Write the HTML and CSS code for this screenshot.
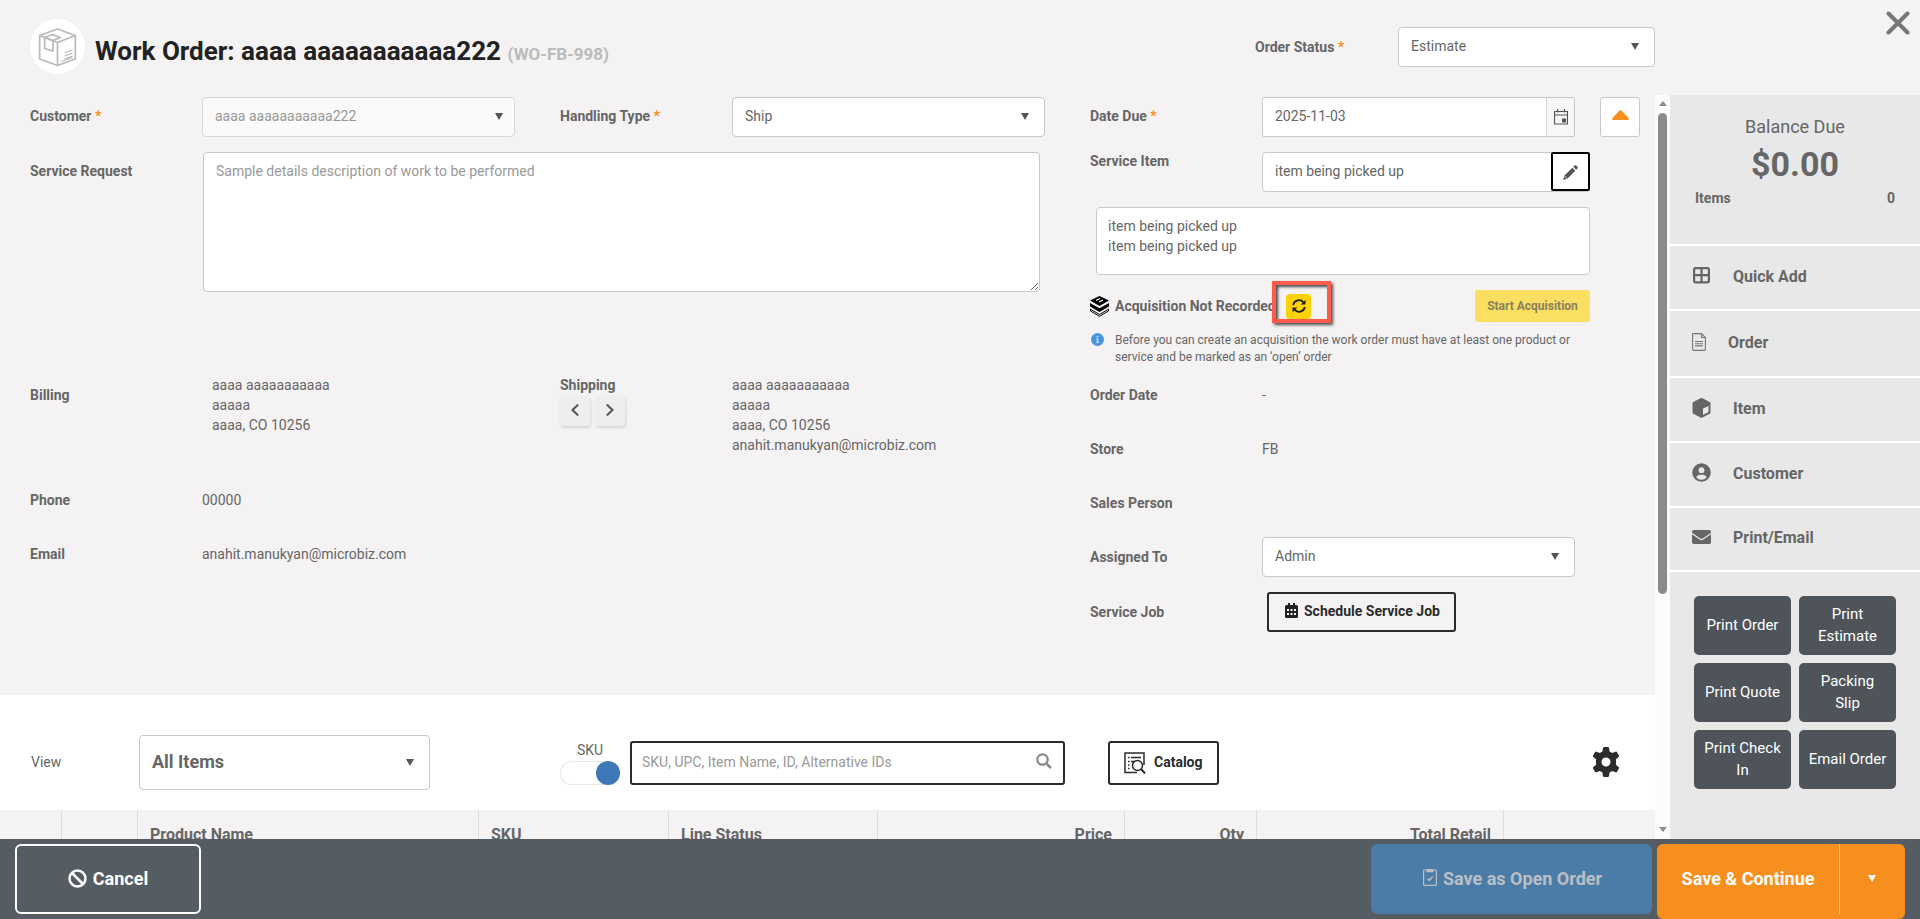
FILE: index.html
```html
<!DOCTYPE html>
<html lang="en">
<head>
  <meta charset="UTF-8">
  <meta name="viewport" content="width=device-width, initial-scale=1.0">
  <title>Work Order WO-FB-998</title>
  <link rel="stylesheet" href="styles.css">
</head>
<body>

<div class="page">

  <!-- Header -->
  <header class="header">
    <div class="header-icon">
      <svg width="39" height="40" viewBox="0 0 35 40" preserveAspectRatio="none" fill="none" stroke="#b9b9b9" stroke-width="1.5" stroke-linejoin="round">
        <path d="M17.5 2 33.500 8.500V32L17.500 38.500 1.500 32V8.500Z"/>
        <path d="M1.500 8.500 17.500 15.500 33.500 8.500M17.500 15.500V38.500"/>
        <path d="M6 10.500 13 7.500 20 10.500 13.500 13.500M6 10.500V21.500L13.500 24V13.500Z"/>
        <path d="M24 26 31 23M24 29 31 26M24 32 31 29M20.500 34.500 31 30.500" stroke-width="1.200"/>
      </svg>
    </div>
    <h1 class="title">Work Order: aaaa aaaaaaaaaaa222 <small>(WO-FB-998)</small></h1>
    <div class="status">
      <label class="label">Order Status <i>*</i></label>
      <div class="select status-select">Estimate</div>
    </div>
    <button class="close" aria-label="Close">
      <svg width="24" height="24" viewBox="0 0 24 24" stroke="#777" stroke-width="4" stroke-linecap="round"><path d="M2.500 2.500 21.500 21.500M21.500 2.500 2.500 21.500"/></svg>
    </button>
  </header>

  <div class="body">
    <main class="main">

      <section class="form">
        <div class="form-left">
          <div class="row row-top">
            <label class="label">Customer <i>*</i></label>
            <div class="select disabled">aaaa aaaaaaaaaaa222</div>
            <label class="label second">Handling Type <i>*</i></label>
            <div class="select">Ship</div>
          </div>
          <div class="row row-request">
            <label class="label">Service Request</label>
            <textarea class="textarea request" placeholder="Sample details description of work to be performed"></textarea>
          </div>
          <div class="row row-address">
            <span class="label billing-label">Billing</span>
            <div class="address billing">aaaa aaaaaaaaaaa<br>aaaaa<br>aaaa, CO 10256</div>
            <div class="shipping-label">
              <span class="label">Shipping</span>
              <div class="arrows">
                <button class="arrow" aria-label="Previous"><svg width="10" height="14" viewBox="0 0 10 14"><path d="M8.200 1.500 2.500 7 8.200 12.500"/></svg></button>
                <button class="arrow" aria-label="Next"><svg width="10" height="14" viewBox="0 0 10 14"><path d="M1.800 1.500 7.500 7 1.800 12.500"/></svg></button>
              </div>
            </div>
            <div class="address">aaaa aaaaaaaaaaa<br>aaaaa<br>aaaa, CO 10256<br>anahit.manukyan@microbiz.com</div>
          </div>
          <div class="row row-info">
            <span class="label">Phone</span><span>00000</span>
          </div>
          <div class="row row-info">
            <span class="label">Email</span><span>anahit.manukyan@microbiz.com</span>
          </div>
        </div>

        <div class="form-right">
          <div class="row row-top">
            <label class="label">Date Due <i>*</i></label>
            <div class="date">
              <span class="date-value">2025-11-03</span>
              <span class="date-btn">
                <svg width="14" height="16" viewBox="0 0 14 16" fill="none" stroke="#555"><path d="M.5 2.500h13v12.500H.5zM.5 6h13M3.500 0v3.500M10.500 0v3.500" stroke-width="1.200"/><path d="M8 9.500h4v4H8z" fill="#555" stroke="none"/></svg>
              </span>
            </div>
            <button class="collapse" aria-label="Collapse"><svg width="17" height="10" viewBox="0 0 16 10" preserveAspectRatio="none"><path d="M7 .5Q8 0 9 .5L15.800 8.200Q16.200 10 14.500 10H1.500Q-.2 10 .2 8.200Z" fill="#f78f1e"/></svg></button>
          </div>
          <div class="row row-item">
            <label class="label">Service Item</label>
            <div class="item-input">
              <span>item being picked up</span>
              <button class="edit" aria-label="Edit">
                <svg width="15" height="15" viewBox="0 0 15 15" fill="#555"><path d="M9.300 2.700 12.300 5.700 4.500 13.500 0 15 1.500 10.500ZM10.200 1.800 11.500.5Q12.300-.2 13.200.6L14.400 1.800Q15.200 2.700 14.500 3.500L13.200 4.800Z"/><path d="M1.800 11.300 3.700 13.200" stroke="#fff"/></svg>
              </button>
            </div>
          </div>
          <textarea class="textarea item-note">item being picked up
item being picked up</textarea>
          <div class="acquisition">
            <svg width="19" height="21" viewBox="0 0 19 21"><path d="M9.500 0 19 4.500 9.500 10 0 4.500Z"/><path d="M6 4.500 10 2.500M9 6 13 4" stroke="#fff" stroke-width="1.200"/><path d="M0 7 9.500 12.300 19 7V10.500L9.500 16 0 10.500Z"/><path d="M.5 13.200 9.500 18.500 18.500 13.200V15L9.500 20.300.5 15Z" fill="none" stroke="#000"/></svg>
            <span class="label">Acquisition Not Recorded</span>
            <button class="refresh" aria-label="Refresh">
              <svg width="14" height="14" viewBox="0 0 14 14" fill="none" stroke="#222" stroke-width="1.800"><path d="M1.200 6A5.900 5.900 0 0 1 11.500 3.300M12.800 8A5.900 5.900 0 0 1 2.500 10.700"/><path d="M13.500.8V5.500H8.800ZM.5 13.200V8.500H5.200Z" fill="#222" stroke="none"/></svg>
            </button>
            <span class="marker"></span>
            <button class="start">Start Acquisition</button>
          </div>
          <div class="hint">
            <span class="hint-icon"><svg width="13" height="13" viewBox="0 0 13 13"><circle cx="6.500" cy="6.500" r="6.500" fill="#4a94da"/><path d="M5.700 3h1.600v1.500H5.700zM5.300 5.500h2v3.500h.6v1H5.200V9h.6V6.500h-.5z" fill="#c3ddf3"/></svg></span>
            <span>Before you can create an acquisition the work order must have at least one product or service and be marked as an ‘open’ order</span>
          </div>
          <div class="row row-line"><span class="label">Order Date</span><span>-</span></div>
          <div class="row row-line"><span class="label">Store</span><span>FB</span></div>
          <div class="row row-line"><span class="label">Sales Person</span></div>
          <div class="row row-line"><label class="label">Assigned To</label><div class="select">Admin</div></div>
          <div class="row row-line job">
            <span class="label">Service Job</span>
            <button class="btn-outline schedule">
              <svg width="13" height="15" viewBox="0 0 13 15"><path d="M1.500 2H3V0h2v2h3V0h2v2h1.500Q13 2 13 3.500V13.500Q13 15 11.500 15H1.500Q0 15 0 13.500V3.500Q0 2 1.500 2Z" fill="#222"/><path d="M2 6h2v2H2zM5.500 6h2v2h-2zM9 6h2v2H9zM2 10h2v2H2zM5.500 10h2v2h-2zM9 10h2v2H9z" fill="#f4f2f3"/></svg>
              Schedule Service Job
            </button>
          </div>
        </div>
      </section>

      <!-- Items toolbar -->
      <section class="toolbar">
        <span class="view">View</span>
        <div class="select view-select">All Items</div>
        <div class="sku">
          <span>SKU</span>
          <div class="toggle"></div>
        </div>
        <div class="search">
          <span>SKU, UPC, Item Name, ID, Alternative IDs</span>
          <svg width="16" height="16" viewBox="0 0 16 16" fill="none" stroke="#8a8a8a" stroke-width="2.300"><circle cx="6.500" cy="6.500" r="5.200"/><path d="M10.300 10.300 15 15" stroke-width="2.600"/></svg>
        </div>
        <button class="btn-outline catalog">
          <svg width="22" height="22" viewBox="0 0 22 22" fill="none" stroke="#2b2b2b" stroke-width="1.500"><path d="M13 20.500H1V1H20V13"/><path d="M4 5.500h1.500M7 5.500h10M4 9.500h1.500M7 9.500h4M4 13h1.500M4 16.500h1.500"/><circle cx="13.500" cy="13.500" r="5"/><path d="M17 17 21 21.500" stroke-width="2"/></svg>
          Catalog
        </button>
        <button class="gear" aria-label="Settings">
          <svg width="28" height="30" viewBox="0 0 28 30" fill="#2b2b2b"><path fill-rule="evenodd" d="M11 1Q11.200 0 12.200 0h3.600Q16.800 0 17 1l.6 3.500 2.600 1.500 3.400-1.300q.9-.3 1.400.5l1.900 3.300q.5.800-.3 1.500L23.900 12.300q.3 2.700 0 5.400l2.700 2.300q.8.700.3 1.500L25 24.800q-.5.800-1.400.5L20.200 24l-2.600 1.500L17 29q-.2 1-1.200 1h-3.600q-1 0-1.200-1l-.6-3.500L7.800 24 4.400 25.300q-.9.300-1.400-.5L1.100 21.500Q.6 20.700 1.400 20L4.100 17.700q-.3-2.700 0-5.400L1.400 10Q.6 9.300 1.100 8.500L3 5.200q.5-.8 1.400-.5L7.800 6 10.400 4.500ZM14 10.500a4.500 4.500 0 1 0 0 9 4.500 4.500 0 0 0 0-9Z"/></svg>
        </button>
      </section>

      <div class="table-head">
        <span></span>
        <span></span>
        <span>Product Name</span>
        <span>SKU</span>
        <span>Line Status</span>
        <span class="num">Price</span>
        <span class="num">Qty</span>
        <span class="num">Total Retail</span>
        <span></span>
      </div>
    </main>

    <div class="scrollbar">
      <span class="scroll-up"></span>
      <span class="scroll-thumb"></span>
      <span class="scroll-down"></span>
    </div>

    <aside class="sidebar">
      <div class="balance">
        <div class="balance-title">Balance Due</div>
        <div class="balance-sum">$0.00</div>
        <div class="balance-items"><span>Items</span><span>0</span></div>
      </div>
      <a class="nav">
        <svg width="19" height="17" viewBox="-1 0 19 17" fill="none" stroke="#666" stroke-width="2.200"><rect x="1.100" y="1.100" width="14.800" height="14.200" rx="1.500"/><path d="M8.500 1v15M1 8.200h15"/></svg>
        Quick Add
      </a>
      <a class="nav nav-order">
        <svg width="14" height="18" viewBox="0 0 14 18" fill="none" stroke="#777" stroke-width="1.100"><path d="M1.500.6H9.500L13.400 4.500V16.500Q13.400 17.400 12.500 17.400H1.500Q.6 17.400.6 16.500V1.500Q.6.6 1.500.6ZM9.500.6V4.500H13.400M3 8.500h8M3 10.700h8M3 12.900h8"/></svg>
        Order
      </a>
      <a class="nav">
        <svg width="19" height="20" viewBox="-.5 0 19 20"><path d="M8 .3Q9 -.1 10 .3L17.200 4Q18 4.500 18 5.300V14.500Q18 15.300 17.200 15.800L10 19.600Q9 20 8 19.600L.8 15.800Q0 15.300 0 14.500V5.300Q0 4.500.8 4Z" fill="#666"/><path d="M10.500 10.500 16 8V14L10.500 17Z" fill="#e8e8e8"/></svg>
        Item
      </a>
      <a class="nav">
        <svg width="19" height="19" viewBox="0 0 19 19"><circle cx="9.500" cy="9.500" r="9.300" fill="#666"/><circle cx="9.500" cy="7.200" r="2.900" fill="#e8e8e8"/><path d="M4.200 14.200Q5.500 11.700 7.500 11.700H11.500Q13.500 11.700 14.800 14.200 12.500 16.700 9.500 16.700T4.200 14.200Z" fill="#e8e8e8"/></svg>
        Customer
      </a>
      <a class="nav nav-print">
        <svg width="19" height="14" viewBox="0 0 19 14"><rect width="19" height="14" rx="1.700" fill="#666"/><path d="M0 3.500 8 9Q9.500 10 11 9L19 3.500" fill="none" stroke="#e8e8e8" stroke-width="1.300"/></svg>
        Print/Email
      </a>
      <div class="prints">
        <button>Print Order</button>
        <button>Print Estimate</button>
        <button>Print Quote</button>
        <button>Packing Slip</button>
        <button>Print Check In</button>
        <button>Email Order</button>
      </div>
    </aside>
  </div>

  <footer class="footer">
    <button class="cancel">
      <svg width="19" height="19" viewBox="0 0 19 19" fill="none" stroke="#fff" stroke-width="2.500"><circle cx="9.500" cy="9.500" r="8"/><path d="M4 4 15 15"/></svg>
      Cancel
    </button>
    <button class="save-open">
      <svg width="14" height="18" viewBox="0 0 14 18" fill="none" stroke="#b9bfc5" stroke-width="1.200"><rect x=".6" y="2" width="12.800" height="15.400" rx=".8"/><path d="M4 1.500h6v2.200H4z" fill="#b9bfc5"/><path d="M4.500 10.500 6.300 12.300 9.700 8.500" stroke-width="1.500"/></svg>
      Save as Open Order
    </button>
    <div class="save">
      <button class="save-main">Save &amp; Continue</button>
      <button class="save-more" aria-label="More"></button>
    </div>
  </footer>
</div>

</body>
</html>
```

FILE: styles.css
```css
* {
  box-sizing: border-box;
}

html, body {
  margin: 0;
  padding: 0;
  height: 100%;
  overflow: hidden;
  font-family: Roboto, "Liberation Sans", sans-serif;
  font-size: 14px;
  line-height: 20px;
  color: #666;
  background: #f4f2f3;
}

button {
  font-family: inherit;
  margin: 0;
  padding: 0;
  border: none;
  background: none;
  cursor: pointer;
}

svg {
  display: block;
  flex: none;
}

.page {
  display: flex;
  flex-direction: column;
  height: 919px;
}

/* Header */
.header {
  display: flex;
  flex: none;
  height: 95px;
  padding-left: 30px;
}

.header-icon {
  display: flex;
  align-items: center;
  justify-content: center;
  width: 55px;
  height: 55px;
  margin-top: 19px;
  border-radius: 50%;
  background: #fff;
}

.title {
  margin: 31px 0 0 10px;
  width: 1160px;
  font-size: 26px;
  line-height: 40px;
  font-weight: 700;
  color: #222;
  white-space: nowrap;
}

.title small {
  font-size: 17px;
  color: #bbb;
}

.status {
  display: flex;
  height: 40px;
  margin-top: 27px;
}

.status .label {
  width: 143px;
  line-height: 40px;
}

.status-select {
  width: 257px;
}

.close {
  align-self: flex-start;
  margin: 11px 0 0 231px;
}

.label {
  font-weight: 700;
  line-height: 38px;
}

.label i {
  font-style: normal;
  color: #f78f1e;
}

.select {
  position: relative;
  height: 40px;
  padding: 0 12px;
  line-height: 37px;
  border: 1px solid #c8c8c8;
  border-radius: 4px;
  background: #fff;
}

.select::after,
.save-more::after {
  content: "";
  position: absolute;
  right: 15px;
  top: 50%;
  margin-top: -4px;
  border: 4.5px solid transparent;
  border-top: 7px solid #555;
  border-bottom: none;
}

.select.disabled {
  color: #999;
  background: #fafafa;
  border-color: #d8d8d8;
}

.select.disabled::after {
  right: 11px;
}

.textarea {
  display: block;
  padding: 8px 12px;
  font: inherit;
  color: #666;
  border: 1px solid #c8c8c8;
  border-radius: 4px;
  background: #fff;
  outline: none;
}

.textarea::placeholder {
  color: #999;
}

/* Body */
.body {
  display: flex;
  flex: none;
  height: 744px;
  overflow: hidden;
}

.main {
  width: 1655px;
}

.form {
  display: flex;
  height: 600px;
  padding: 2px 0 0 30px;
}

.form-left {
  width: 1060px;
}

.form-right {
  width: 550px;
}

.row {
  display: grid;
  grid-template-columns: 172px 313px;
}

.form-left .row-top,
.row-address {
  grid-template-columns: 172px 313px 217px 313px;
}

.second,
.shipping-label {
  padding-left: 45px;
}

.row-request {
  grid-template-columns: 173px 837px;
  margin-top: 15px;
}

.request {
  height: 140px;
}

.row-address {
  margin-top: 83px;
  height: 105px;
}

.billing-label {
  line-height: 40px;
}

.billing {
  padding-left: 10px;
}

.shipping-label .label {
  line-height: 20px;
}

.arrows {
  display: flex;
  gap: 5px;
  margin-top: 1px;
}

.arrow {
  display: flex;
  justify-content: center;
  width: 30px;
  height: 30px;
  padding: 7px 1px 0 0;
  border-radius: 4px;
  background: #eee;
  box-shadow: 1px 2px 3px rgba(0, 0, 0, 0.12);
}

.arrow path {
  fill: none;
  stroke: #555;
  stroke-width: 2;
}

.row-info,
.row-line {
  height: 54px;
  line-height: 40px;
}

.row-info .label,
.row-line .label {
  line-height: 40px;
}

/* Right column */
.form-right .row-top {
  grid-template-columns: 172px 313px 40px;
}

.date {
  display: flex;
  height: 40px;
  line-height: 37px;
  border: 1px solid #c8c8c8;
  border-radius: 2px;
  background: #fff;
}

.date-value {
  flex: 1;
  padding-left: 12px;
}

.date-btn {
  display: flex;
  align-items: center;
  justify-content: center;
  width: 28px;
  border-left: 1px solid #d5d5d5;
  background: #f7f7f7;
}

.collapse {
  display: flex;
  align-items: center;
  justify-content: center;
  height: 40px;
  margin-left: 25px;
  width: 40px;
  padding-bottom: 4px;
  border: 1px solid #c8c8c8;
  border-radius: 3px;
  background: #fff;
}

.row-item {
  grid-template-columns: 172px 328px;
  margin-top: 15px;
}

.row-item .label {
  line-height: 18px;
}

.item-input {
  display: flex;
  justify-content: space-between;
  height: 40px;
  padding-left: 12px;
  line-height: 37px;
  border: 1px solid #c8c8c8;
  border-radius: 4px;
  background: #fff;
}

.edit {
  display: flex;
  align-items: center;
  justify-content: center;
  width: 39px;
  height: 39px;
  margin: -1px -1px 0 0;
  padding-top: 2px;
  border: 2px solid #000;
  border-radius: 2px;
}

.item-note {
  width: 494px;
  height: 68px;
  margin: 15px 0 0 6px;
  padding-left: 11px;
  resize: none;
  overflow: hidden;
}

.acquisition {
  position: relative;
  display: flex;
  align-items: center;
  width: 500px;
  height: 32px;
  margin-top: 15px;
}

.acquisition .label {
  margin-left: 6px;
  width: 171px;
  white-space: nowrap;
}

.refresh {
  display: flex;
  align-items: center;
  justify-content: center;
  width: 25px;
  height: 25px;
  border-radius: 4px;
  background: #ffd200;
}

/* highlight over the refresh button */
.marker {
  position: absolute;
  left: 182px;
  top: -9px;
  width: 59px;
  height: 42px;
  border: 4px solid #fc5b4d;
  box-shadow: 2px 2px 3px rgba(0, 0, 0, 0.7), inset 2px 2px 3px rgba(0, 0, 0, 0.7);
}

.start {
  margin-left: auto;
  width: 115px;
  height: 32px;
  font-size: 12px;
  font-weight: 700;
  color: #8a805c;
  border-radius: 3px;
  background: #fbdf62;
}

.hint {
  display: flex;
  width: 500px;
  height: 43px;
  margin-top: 10px;
  font-size: 12px;
  line-height: 17px;
}

.hint-icon {
  width: 25px;
  flex: none;
  padding: 1px 0 0 1px;
}

.btn-outline {
  display: flex;
  align-items: center;
  font-size: 14px;
  font-weight: 700;
  color: #2b2b2b;
  border: 2px solid #2b2b2b;
  border-radius: 3px;
}

.job {
  margin-top: 1px;
}

.schedule {
  width: 189px;
  height: 40px;
  margin-left: 5px;
  padding: 0 0 3px 16px;
  gap: 6px;
  white-space: nowrap;
}

/* Toolbar */
.toolbar {
  display: flex;
  height: 115px;
  padding: 40px 0 0 31px;
  background: #fff;
}

.view {
  width: 108px;
  line-height: 55px;
}

.view-select {
  width: 291px;
  height: 55px;
  font-size: 18px;
  font-weight: 700;
  line-height: 52px;
}

.sku {
  width: 60px;
  margin: 5px 0 0 130px;
  text-align: center;
}

.toggle {
  display: flex;
  justify-content: flex-end;
  width: 60px;
  height: 24px;
  margin-top: 1px;
  border-radius: 12px;
  box-shadow: inset 0 0 0 1px #e6e6e6;
}

.toggle::after {
  content: "";
  width: 24px;
  height: 24px;
  border-radius: 50%;
  background: #3d79b8;
}

.search {
  display: flex;
  justify-content: space-between;
  width: 435px;
  height: 44px;
  margin: 6px 0 0 10px;
  padding: 0 11px 0 10px;
  line-height: 39px;
  color: #999;
  border: 2px solid #2b2b2b;
  border-radius: 3px;
}

.search svg {
  margin-top: 10px;
}

.catalog {
  width: 111px;
  height: 44px;
  margin: 6px 0 0 43px;
  padding: 0 0 2px 14px;
  gap: 8px;
}

.catalog svg {
  margin-top: 2px;
}

.gear {
  align-self: flex-start;
  margin: 12px 0 0 373px;
}

.table-head {
  display: grid;
  grid-template-columns: 62px 76px 341px 190px 209px 247px 132px 247px 151px;
  height: 50px;
  font-size: 16px;
  font-weight: 700;
  line-height: 50px;
}

.table-head span {
  padding: 0 12px;
  border-right: 1px solid #ddd;
}

.table-head span:last-child {
  border: none;
}

.table-head .num {
  text-align: right;
}

/* Scrollbar */
.scrollbar {
  display: flex;
  flex-direction: column;
  align-items: center;
  width: 15px;
  padding: 6px 0 7px;
  background: #fcfcfc;
}

.scroll-up,
.scroll-down {
  border: 4.5px solid transparent;
  border-top: none;
  border-bottom: 5px solid #8b8b8b;
}

.scroll-thumb {
  width: 9px;
  height: 481px;
  margin-top: 7px;
  border-radius: 5px;
  background: #8b8b8b;
}

.scroll-down {
  margin-top: auto;
  border-top: 5px solid #8b8b8b;
  border-bottom: none;
}

/* Sidebar */
.sidebar {
  width: 250px;
  background: #e8e8e8;
}

.balance {
  height: 149px;
  padding: 20px 25px 0;
  text-align: center;
}

.balance-title {
  font-size: 18px;
  line-height: 24px;
}

.balance-sum {
  font-size: 34px;
  line-height: 40px;
  font-weight: 700;
  margin-top: 5px;
}

.balance-items {
  display: flex;
  justify-content: space-between;
  margin-top: 4px;
  font-weight: 700;
}

.nav {
  display: flex;
  align-items: center;
  gap: 22px;
  height: 65px;
  padding: 0 0 2px 22px;
  border-top: 2px solid #fff;
  font-size: 16px;
  font-weight: 700;
}

.nav svg {
  margin-bottom: 2px;
}

.nav-order {
  height: 67px;
}

.nav-print {
  height: 64px;
}

.prints {
  display: grid;
  grid-template-columns: 97px 97px;
  grid-auto-rows: 59px;
  gap: 8px;
  padding: 24px 24px 0;
  border-top: 2px solid #fff;
}

.prints button {
  padding: 0 8px 2px;
  font-size: 15px;
  line-height: 22px;
  font-weight: 400;
  color: #fff;
  border-radius: 5px;
  background: #4e545a;
}

/* Footer */
.footer {
  display: flex;
  flex: none;
  height: 80px;
  padding: 5px 15px 0;
  background: #555c63;
}

.footer button {
  display: flex;
  align-items: center;
  justify-content: center;
  height: 70px;
  padding-bottom: 2px;
  font-size: 18px;
  font-weight: 700;
  color: #fff;
}

.footer .cancel {
  width: 186px;
  gap: 6px;
  border: 2px solid #fff;
  border-radius: 6px;
}

.footer .save-open {
  width: 281px;
  margin: 0 5px 0 auto;
  padding-left: 2px;
  gap: 6px;
  border-radius: 6px;
  color: #b9bfc5;
  background: #4b7ca7;
}

.save-open svg {
  margin-bottom: 2px;
}

.save {
  display: flex;
  width: 248px;
  border-radius: 6px;
  background: #f78f1e;
}

.footer .save-main {
  width: 183px;
  border-right: 1px solid #fbc78f;
}

.save-more {
  position: relative;
  flex: 1;
}

.save-more::after {
  right: 29px;
  border-top-color: #fff;
}
```
